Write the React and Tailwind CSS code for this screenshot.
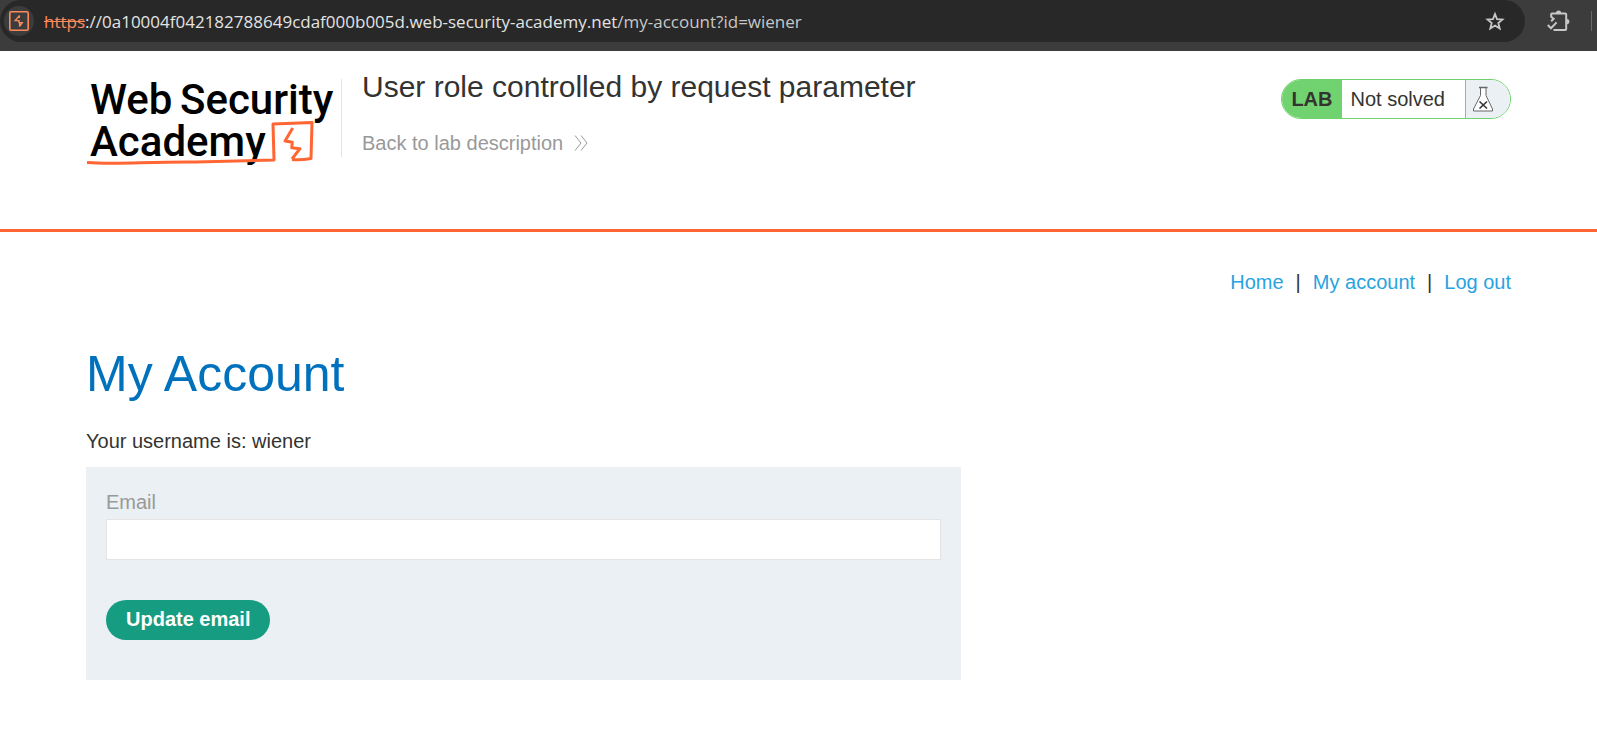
function BurpIcon() {
  return (
    <svg viewBox="0 0 20 20" className="size-5" fill="none" stroke="#ff8a5c" aria-hidden="true">
      <rect x="0.8" y="0.8" width="18.4" height="18.4" rx="1.5" strokeWidth="1.6" />
      <path d="M10.6 4.4L6.2 9.6H10V11.6H13.2L10.4 15.6M10.3 7V4.8M10.6 15V11.6" strokeWidth="1.4" />
    </svg>
  );
}

function StarIcon() {
  return (
    <svg viewBox="0 0 20 20" className="size-5" fill="none" stroke="#c7c7c7" strokeWidth="1.8" aria-hidden="true">
      <path d="M10 3L12 8.1L17.5 8.5L13.3 12.1L14.7 17.5L10 14.6L5.3 17.5L6.7 12.1L2.5 8.5L8 8.1Z" />
    </svg>
  );
}

function ExtensionsIcon() {
  return (
    <svg viewBox="0 0 24 24" className="size-6" fill="none" stroke="#c7c7c7" strokeWidth="2" aria-hidden="true">
      <path d="M4.2 12.2L6.6 9.8L4.2 7.8V5.2Q4.2 4.4 5 4.4H18.2Q19.2 4.4 19.2 5.4V20Q19.2 21 18.2 21H6.5" />
      <path d="M0.8 16L4 19.2L9.6 13.4" />
      <path d="M9 4A2.6 2.6 0 0 1 14.2 4ZM19.8 10A2.6 2.6 0 0 1 19.8 15.2Z" fill="#c7c7c7" stroke="none" />
    </svg>
  );
}

function BrowserBar() {
  return (
    <div className="flex items-start bg-[#3c3c3c] pb-[9px] font-['Open_Sans','Noto_Sans',sans-serif]">
      <div className="flex h-[42px] min-w-0 flex-1 items-center rounded-full bg-[#282828] pr-5 pl-1">
        <button type="button" aria-label="Site information" className="flex size-[30px] shrink-0 items-center justify-center rounded-full bg-[#3c3c3c]">
          <BurpIcon />
        </button>
        <div className="ml-[10px] min-w-0 flex-1 truncate pt-0.5 text-[17px] leading-6 text-[#e3e3e3]">
          <span className="text-[#ff8a5c] line-through">https</span>
          <span>://0a10004f042182788649cdaf000b005d.web-security-academy.net</span>
          <span className="text-[#c7c7c7]">/my-account?id=wiener</span>
        </div>
        <button type="button" aria-label="Bookmark this page"><StarIcon /></button>
      </div>
      <div className="flex h-[42px] items-center gap-5 pr-[5px] pl-[22px]">
        <button type="button" aria-label="Extensions"><ExtensionsIcon /></button>
        <span className="h-5 w-px bg-[#6a6a6a]" />
      </div>
    </div>
  );
}

function AcademyLogo() {
  return (
    <svg viewBox="0 0 250 90" className="h-[90px] w-[250px] overflow-visible" role="img" aria-label="Web Security Academy">
      <g fill="#000" className="font-['Roboto',sans-serif] text-[42px] font-medium">
        <text x="4" y="35">Web</text>
        <text x="94" y="35">Security</text>
        <text x="4" y="77">Academy</text>
      </g>
      <g fill="none" stroke="#ff6633" strokeLinejoin="round">
        <path d="M1 83.5C30 86 60 82.5 110 83L188 81L187 45L226 43.500L225 79.5Q214 81.5 206 80.5" strokeWidth="3" />
        <path d="M206.700 49L199 62L206.300 63.300L205.700 68.700L214 69.700L206 80" strokeWidth="3" />
      </g>
    </svg>
  );
}

function LabStatus() {
  return (
    <div className="flex h-10 overflow-hidden rounded-full border border-[#70d36f] leading-[38px]">
      <span className="bg-[#70d36f] px-[9px] font-bold">LAB</span>
      <span className="border-r border-[#70d36f] pr-5 pl-[9px]">Not solved</span>
      <span className="flex w-11 items-center bg-[#eaf0f3] pl-[7px]">
        <svg viewBox="0 0 20 26" className="h-[26px] w-5" fill="#fff" stroke="#666" strokeWidth="1" aria-hidden="true">
          <path d="M7.5 2V9.5L0.5 23V25H19.5V23L13 9.5V2" />
          <path d="M6 1.5H14.5" strokeWidth="1.5" />
          <path d="M6.5 15.5L14 22.5M14 15.5L6.5 22.5" stroke="#333" strokeWidth="1.6" />
        </svg>
      </span>
    </div>
  );
}

function LabHeader() {
  return (
    <header className="border-b-[3px] border-[#ff6633] pt-7 pb-[60px]">
      <div className="mx-auto flex max-w-[1425px] items-start">
        <a href="#academy" className="shrink-0"><AcademyLogo /></a>
        <div className="ml-[5px] h-[78px] w-px shrink-0 bg-[#e4e4e4]" />
        <div className="-mt-3 ml-5 flex-1">
          <h2 className="text-[30px] leading-[40px]">User role controlled by request parameter</h2>
          <a href="#lab" className="mt-[21px] flex items-center gap-[11px] leading-[30px] text-[#999]">
            Back to lab description
            <svg viewBox="0 0 14 16" className="h-4 w-[14px]" fill="none" stroke="#999" aria-hidden="true">
              <path d="M1 0.5L7 8L1 15.5M7 0.5L13 8L7 15.5" />
            </svg>
          </a>
        </div>
        <LabStatus />
      </div>
    </header>
  );
}

export default function App() {
  return (
    <div className="min-h-screen bg-white font-['Liberation_Sans',Arial,sans-serif] text-[20px] leading-[30px] text-[#333332]">
      <BrowserBar />
      <LabHeader />
      <main className="mx-auto max-w-[1425px] pt-[35px]">
        <nav className="flex justify-end gap-3">
          <a href="#home" className="text-[#29a3e0]">Home</a>
          <span>|</span>
          <a href="#account" className="text-[#29a3e0]">My account</a>
          <span>|</span>
          <a href="#logout" className="text-[#29a3e0]">Log out</a>
        </nav>
        <h1 className="mt-[45px] text-[50px] leading-[64px] text-[#0071bc]">My Account</h1>
        <p className="mt-5">Your username is: wiener</p>
        <form className="mt-[11px] max-w-[875px] bg-[#eaf0f3] px-5 pt-5 pb-10" onSubmit={(e) => e.preventDefault()}>
          <label htmlFor="email" className="block text-[#999]">Email</label>
          <input id="email" type="email" className="mt-[2px] block h-[41px] w-full border border-[#e4e4e4] bg-white px-3 outline-none" />
          <button type="submit" className="mt-10 h-10 rounded-full bg-[#169c80] px-5 pb-0.5 font-bold text-white">Update email</button>
        </form>
      </main>
    </div>
  );
}
